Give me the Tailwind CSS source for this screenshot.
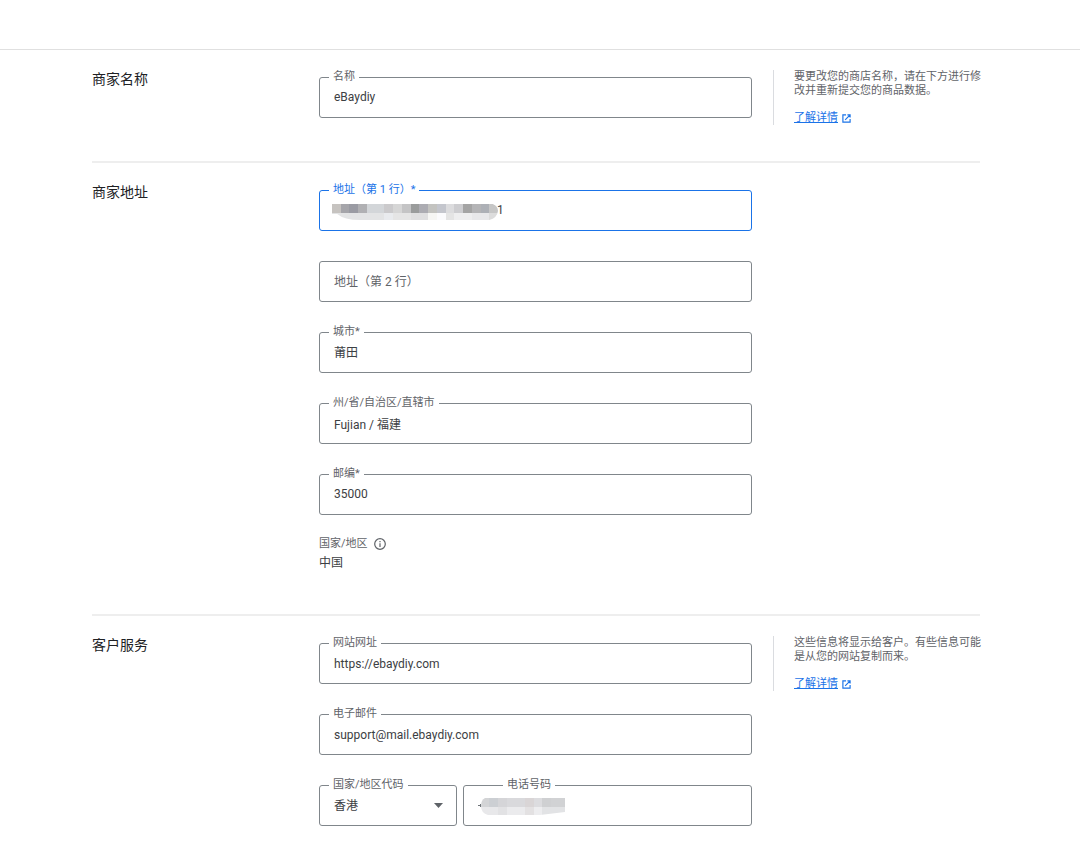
<!DOCTYPE html>
<html lang="zh-CN">

<head>
    <meta charset="UTF-8">
    <meta name="viewport" content="width=device-width, initial-scale=1.0">
    <script src="https://cdn.jsdelivr.net/npm/@tailwindcss/browser@4"></script>
    <title>商家信息</title>
</head>

<body class="bg-white text-[#3c4043] font-[Roboto,'Noto_Sans_CJK_SC',sans-serif]">
    <header class="h-[50px] border-b border-[#e0e0e0]"></header>

    <main class="pl-[92px] pr-[100px]">
        <!-- 商家名称 -->
        <section class="grid grid-cols-[206px_1fr_207px] gap-x-[21px] items-start pt-5 pb-9 border-b-2 border-[#eeeeee]">
            <h2 class="text-sm leading-[18px] text-[#202124]">商家名称</h2>
            <div class="mt-[7px]">
                <div class="relative">
                    <label for="name" class="absolute -top-2 left-[10px] px-1 bg-white text-[11px] leading-4 text-[#5f6368]">名称</label>
                    <input id="name" type="text" value="eBaydiy" class="block w-full h-[41px] px-[14px] pb-[2px] border border-[#80868b] rounded-[3px] text-xs outline-none">
                </div>
            </div>
            <aside class="pl-5 -mr-2 border-l border-[#dadce0] text-[11px] leading-[14px] text-[#5f6368]">
                <p>要更改您的商店名称，请在下方进行修改并重新提交您的商品数据。</p>
                <a href="#" class="mt-[13px] flex items-center gap-1 text-[#1a73e8]">
                    <span class="underline">了解详情</span>
                    <svg class="size-[9px]" viewBox="0 0 10 10" fill="none" stroke="currentColor" stroke-width="1.3"><path d="M4.500 1H1v8h8V5.500M6 1h3v3M9 1 3.500 6.500" /></svg>
                </a>
            </aside>
        </section>

        <!-- 商家地址 -->
        <section class="grid grid-cols-[206px_1fr_207px] gap-x-[21px] items-start pt-5 pb-[43px] border-b-2 border-[#eeeeee]">
            <h2 class="text-sm leading-[18px] text-[#202124]">商家地址</h2>
            <div class="mt-[7px]">
                <div class="flex flex-col gap-[30px]">
                    <div class="relative">
                        <label for="addr1" class="absolute -top-2 left-[10px] px-1 bg-white text-[11px] leading-4 text-[#1a73e8]">地址（第 1 行）*</label>
                        <input id="addr1" type="text" value="1" class="block w-full h-[41px] pl-[177px] pr-[14px] pb-[2px] border border-[#1a73e8] rounded-[3px] text-xs outline-none">
                        <!-- 地址打码 -->
                        <svg class="absolute left-[13px] top-[14px] w-[166px] h-4 pointer-events-none" viewBox="0 0 190 16" preserveAspectRatio="none" shape-rendering="crispEdges">
                            <clipPath id="addrMask"><path d="M0 0H184Q190 2 190 7Q189 14 180 16H32Q14 16 6 10H0z" /></clipPath>
                            <g clip-path="url(#addrMask)">
                                <path fill="#c6c3c0" d="M0 0h10v9H0z" />
                                <path fill="#a5a5aa" d="M10 0h10v9H10z" />
                                <path fill="#9a9ba3" d="M20 0h10v9H20z" />
                                <path fill="#b0b0b3" d="M30 0h10v9H30z" />
                                <path fill="#d3d6d9" d="M40 0h20v9H40z" />
                                <path fill="#cbcacc" d="M60 0h10v9H60z" />
                                <path fill="#d6d6d6" d="M70 0h10v9H70z" />
                                <path fill="#c4c4c5" d="M80 0h10v9H80z" />
                                <path fill="#9a9c9c" d="M90 0h10v9H90z" />
                                <path fill="#acacb2" d="M100 0h10v9H100z" />
                                <path fill="#c3c3c0" d="M110 0h10v9H110z" />
                                <path fill="#c4c6cd" d="M120 0h10v9H120z" />
                                <path fill="#dcdcde" d="M130 0h10v9H130z" />
                                <path fill="#cdcdd0" d="M140 0h10v9H140z" />
                                <path fill="#a4a4a4" d="M150 0h10v9H150z" />
                                <path fill="#b4b4b6" d="M160 0h10v9H160z" />
                                <path fill="#adb0b6" d="M170 0h10v9H170z" />
                                <path fill="#c6c6c6" d="M180 0h10v9H180z" />
                                <path fill="#e3e4e5" d="M0 9h60v7H0z" />
                                <path fill="#e9ebee" d="M60 9h10v7H60z" />
                                <path fill="#e5e5e5" d="M70 9h20v7H70z" />
                                <path fill="#dfdfe0" d="M90 9h20v7H90z" />
                                <path fill="#f6f6f4" d="M110 9h10v7H110z" />
                                <path fill="#fbfbfd" d="M120 9h10v7H120z" />
                                <path fill="#e4e4e4" d="M130 9h10v7H130z" />
                                <path fill="#eeeeef" d="M140 9h20v7H140z" />
                                <path fill="#e8e8ea" d="M160 9h20v7H160z" />
                                <path fill="#dcdcdc" d="M180 9h10v7H180z" />
                            </g>
                        </svg>
                    </div>
                    <div class="relative">
                        <input id="addr2" type="text" aria-label="地址（第 2 行）" placeholder="地址（第 2 行）" class="block w-full h-[41px] px-[14px] border border-[#80868b] rounded-[3px] text-xs placeholder:text-[#5f6368] outline-none">
                    </div>
                    <div class="relative">
                        <label for="city" class="absolute -top-2 left-[10px] px-1 bg-white text-[11px] leading-4 text-[#5f6368]">城市*</label>
                        <input id="city" type="text" value="莆田" class="block w-full h-[41px] px-[14px] pb-[2px] border border-[#80868b] rounded-[3px] text-xs outline-none">
                    </div>
                    <div class="relative">
                        <label for="state" class="absolute -top-2 left-[10px] px-1 bg-white text-[11px] leading-4 text-[#5f6368]">州/省/自治区/直辖市</label>
                        <input id="state" type="text" value="Fujian / 福建" class="block w-full h-[41px] px-[14px] border border-[#80868b] rounded-[3px] text-xs outline-none">
                    </div>
                    <div class="relative">
                        <label for="zip" class="absolute -top-2 left-[10px] px-1 bg-white text-[11px] leading-4 text-[#5f6368]">邮编*</label>
                        <input id="zip" type="text" value="35000" class="block w-full h-[41px] px-[14px] pb-[2px] border border-[#80868b] rounded-[3px] text-xs outline-none">
                    </div>
                </div>
                <div class="mt-[21px] flex items-center gap-[6px] text-[11px] leading-4 text-[#5f6368]">
                    国家/地区
                    <svg class="size-3" viewBox="0 0 12 12" fill="none" stroke="currentColor" stroke-width="1.2"><circle cx="6" cy="6" r="5.300" /><path d="M6 5.300V9M6 3v1.200" /></svg>
                </div>
                <p class="mt-1 text-xs leading-[15px]">中国</p>
            </div>
        </section>

        <!-- 客户服务 -->
        <section class="grid grid-cols-[206px_1fr_207px] gap-x-[21px] items-start pt-5">
            <h2 class="text-sm leading-[18px] text-[#202124]">客户服务</h2>
            <div class="mt-[7px] flex flex-col gap-[30px]">
                <div class="relative">
                    <label for="site" class="absolute -top-2 left-[10px] px-1 bg-white text-[11px] leading-4 text-[#5f6368]">网站网址</label>
                    <input id="site" type="url" value="https://ebaydiy.com" class="block w-full h-[41px] px-[14px] border border-[#80868b] rounded-[3px] text-xs outline-none">
                </div>
                <div class="relative">
                    <label for="email" class="absolute -top-2 left-[10px] px-1 bg-white text-[11px] leading-4 text-[#5f6368]">电子邮件</label>
                    <input id="email" type="email" value="support@mail.ebaydiy.com" class="block w-full h-[41px] px-[14px] border border-[#80868b] rounded-[3px] text-xs outline-none">
                </div>
                <div class="flex gap-[6px]">
                    <div class="relative w-[138px]">
                        <label for="code" class="absolute -top-2 left-[10px] px-1 bg-white text-[11px] leading-4 text-[#5f6368]">国家/地区代码</label>
                        <select id="code" class="block w-full h-[41px] px-[14px] border border-[#80868b] rounded-[3px] text-xs appearance-none outline-none">
                            <option>香港</option>
                        </select>
                        <svg class="absolute right-[14px] top-[18px] w-[9px] h-[5px] pointer-events-none" viewBox="0 0 9 5" fill="#5f6368"><path d="M0 0h9L4.500 5z" /></svg>
                    </div>
                    <div class="relative flex-1">
                        <label for="phone" class="absolute -top-2 left-10 px-1 bg-white text-[11px] leading-4 text-[#5f6368]">电话号码</label>
                        <input id="phone" type="tel" class="block w-full h-[41px] px-[14px] border border-[#80868b] rounded-[3px] text-xs outline-none">
                        <!-- 电话打码 -->
                        <svg class="absolute left-[15px] top-[13px] w-[87px] h-[17px] pointer-events-none" viewBox="0 0 87 17" shape-rendering="crispEdges">
                            <clipPath id="phoneMask"><path d="M7 0H87V14L62 17H10Q3 15 3 8Q3 2 7 0z" /></clipPath>
                            <path fill="#70757a" d="M0 7h3v1H0zM2 6h1v3H2z" />
                            <g clip-path="url(#phoneMask)">
                                <path fill="#d3d4d6" d="M3 0h8v9H3z" />
                                <path fill="#cccfd3" d="M11 0h9v9h-9z" />
                                <path fill="#d5d5d8" d="M20 0h9v9h-9z" />
                                <path fill="#d9d9dc" d="M29 0h18v9H29z" />
                                <path fill="#d9d5d6" d="M47 0h9v9h-9z" />
                                <path fill="#dcdcdf" d="M56 0h8v9h-8z" />
                                <path fill="#cfd0d2" d="M64 0h9v9h-9z" />
                                <path fill="#d1d2d4" d="M73 0h14v9H73z" />
                                <path fill="#e8e8ea" d="M3 9h17v8H3z" />
                                <path fill="#e2e2e4" d="M20 9h9v8h-9z" />
                                <path fill="#ebebed" d="M29 9h18v8H29z" />
                                <path fill="#e3e1e2" d="M47 9h9v8h-9z" />
                                <path fill="#ededef" d="M56 9h8v8h-8z" />
                                <path fill="#e2e3e5" d="M64 9h23v8H64z" />
                            </g>
                        </svg>
                    </div>
                </div>
            </div>
            <aside class="pl-5 -mr-2 border-l border-[#dadce0] text-[11px] leading-[14px] text-[#5f6368]">
                <p>这些信息将显示给客户。有些信息可能是从您的网站复制而来。</p>
                <a href="#" class="mt-[13px] flex items-center gap-1 text-[#1a73e8]">
                    <span class="underline">了解详情</span>
                    <svg class="size-[9px]" viewBox="0 0 10 10" fill="none" stroke="currentColor" stroke-width="1.3"><path d="M4.500 1H1v8h8V5.500M6 1h3v3M9 1 3.500 6.500" /></svg>
                </a>
            </aside>
        </section>
    </main>
</body>

</html>
